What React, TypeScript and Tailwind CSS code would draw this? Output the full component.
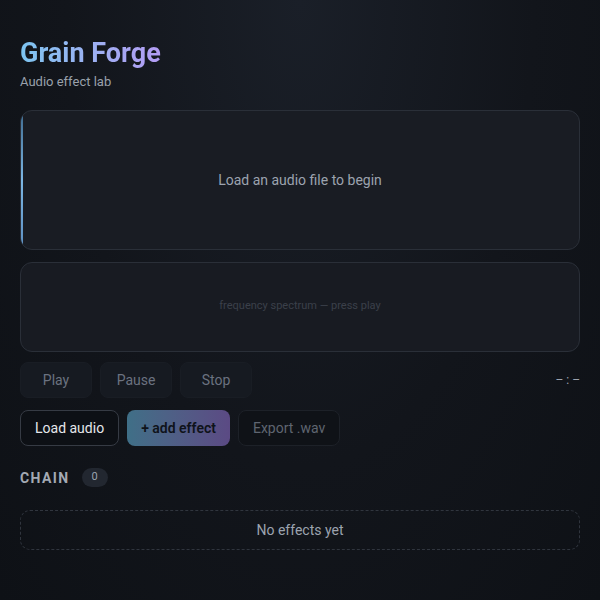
const font = { fontFamily: "Roboto, 'Liberation Sans', sans-serif" };

function ControlButton({ label }: { label: string }) {
  return (
    <button className="h-9 w-[72px] rounded-lg border border-[#191d24] bg-[#161a21] text-sm text-[#6b7280]">
      {label}
    </button>
  );
}

export default function App() {
  return (
    <div
      style={font}
      className="min-h-[600px] w-full bg-[radial-gradient(ellipse_at_top,#1a1f28_0%,#12151b_55%,#0e1116_100%)] px-5 pt-[38px]"
    >
      <h1 className="w-fit bg-gradient-to-r from-[#7cc4f0] to-[#b39cf4] bg-clip-text text-[27px] font-bold leading-[31px] text-transparent">
        Grain Forge
      </h1>
      <p className="mt-[3px] text-[13px] text-[#9aa1ab]">Audio effect lab</p>

      {/* waveform */}
      <div className="relative mt-[18px] flex h-[140px] items-center justify-center overflow-hidden rounded-xl border border-[#2a2f38] bg-[#191c23]">
        <div className="absolute left-0 top-0 h-full w-[2px] bg-gradient-to-b from-[#3f6b8f] via-[#7cb6e3] to-[#5d8fc0]" />
        <span className="text-sm text-[#9ca3af]">Load an audio file to begin</span>
      </div>

      {/* spectrum */}
      <div className="mt-3 flex h-[90px] items-center justify-center rounded-xl border border-[#2a2f38] bg-[#181b22]">
        <span className="text-[11px] text-[#3b404a]">frequency spectrum — press play</span>
      </div>

      <div className="mt-[10px] flex items-center gap-2">
        <ControlButton label="Play" />
        <ControlButton label="Pause" />
        <ControlButton label="Stop" />
        <span className="ml-auto text-xs text-[#9ca3af]">– : –</span>
      </div>

      <div className="mt-[12px] flex items-center gap-2">
        <button className="h-9 rounded-lg border border-[#363b44] bg-[#0d1015] px-[14px] text-sm text-[#e5e7eb]">
          Load audio
        </button>
        <button className="h-9 rounded-lg bg-gradient-to-r from-[#3f6f87] to-[#5b4a84] px-[14px] text-sm font-semibold text-[#0f131a]">
          + add effect
        </button>
        <button className="h-9 rounded-lg border border-[#1d2128] bg-[#0f1217] px-[14px] text-sm text-[#5f6570]">
          Export .wav
        </button>
      </div>

      <div className="mt-[22px] flex items-center gap-3">
        <span className="text-sm font-bold tracking-[0.1em] text-[#a3a9b3]">CHAIN</span>
        <span className="rounded-full bg-[#222730] px-2.5 py-[1px] text-[11px] text-[#9ca3af]">0</span>
      </div>

      <div className="mt-[22px] flex h-10 items-center justify-center rounded-[10px] border border-dashed border-[#30353e] text-sm text-[#9ca3af]">
        No effects yet
      </div>
    </div>
  );
}
